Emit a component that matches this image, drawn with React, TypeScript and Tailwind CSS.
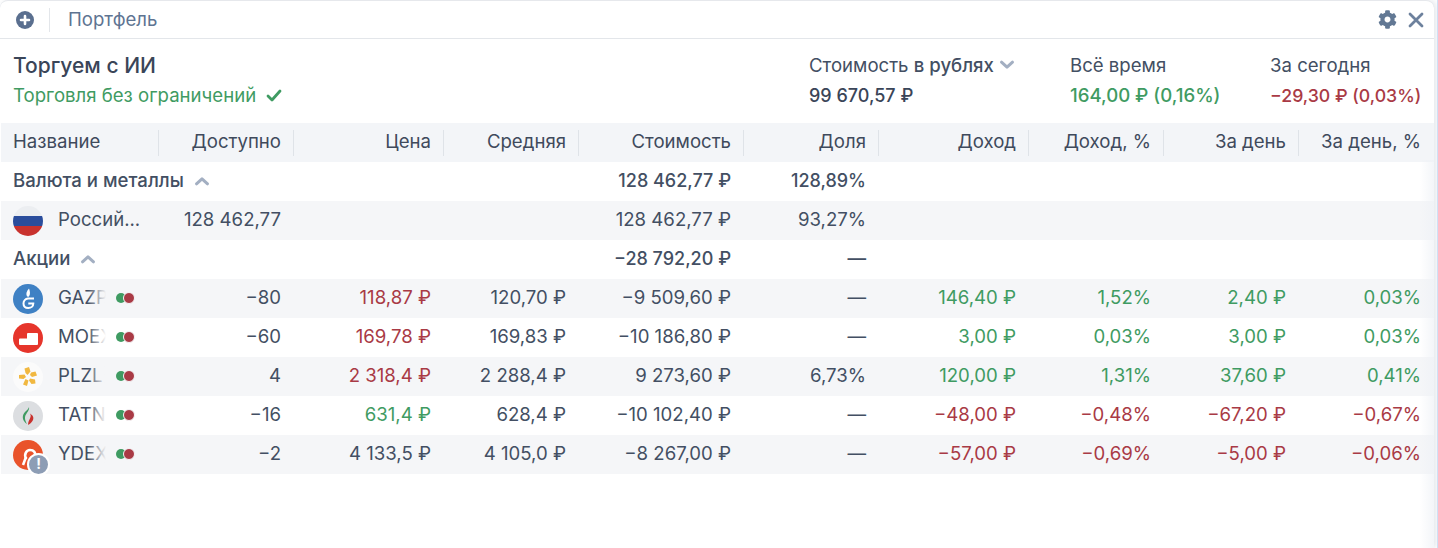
import { FaCog } from "react-icons/fa";

const GREEN = "text-[#3f9b62]";
const RED = "text-[#a93a45]";

function Chevron({ down }: { down?: boolean }) {
  return (
    <svg width="16" height="10" viewBox="0 0 16 10" className={down ? "rotate-180" : ""}>
      <path d="M2.5 7.8 L8 2.8 L13.5 7.8" fill="none" stroke="#a3afc2" strokeWidth="3" strokeLinecap="round" strokeLinejoin="round" />
    </svg>
  );
}

function Dots() {
  return (
    <span className="relative ml-[10px] mb-[2px] h-[12px] w-[20px] shrink-0">
      <span className="absolute left-0 top-[1px] h-[10px] w-[10px] rounded-full bg-[#3f9b62]" />
      <span className="absolute left-[7px] top-0 box-content h-[10px] w-[10px] rounded-full border-[1px] border-[#f5f6f8] bg-[#a93a45]" />
    </span>
  );
}

function FlagRu() {
  return (
    <svg width="30" height="30" viewBox="0 0 30 30">
      <defs>
        <clipPath id="flag">
          <circle cx="15" cy="15" r="15" />
        </clipPath>
      </defs>
      <g clipPath="url(#flag)">
        <rect width="30" height="10" fill="#eceef1" />
        <rect y="10" width="30" height="10" fill="#2a4d9c" />
        <rect y="20" width="30" height="10" fill="#c8322e" />
      </g>
    </svg>
  );
}

function Logo({ ticker }: { ticker: string }) {
  if (ticker === "GAZP") {
    return (
      <svg width="30" height="30" viewBox="0 0 30 30">
        <circle cx="15" cy="15" r="15" fill="#3f81c4" />
        <path d="M16 4.500c-2.500 3-3.200 5-2.200 7.500.5 1 1.500 1 2.300.2 1.400-2 .9-5-.1-7.700z" fill="#fff" />
        <path d="M21 14.500h-6a5 5 0 0 0-4.500 5c0 2.800 2 4.500 4.800 4.500s5-1.800 5-4.500h-5" fill="none" stroke="#fff" strokeWidth="2" />
      </svg>
    );
  }
  if (ticker === "MOEX") {
    return (
      <svg width="30" height="30" viewBox="0 0 30 30">
        <circle cx="15" cy="15" r="15" fill="#e6352b" />
        <path d="M6 16.500a1 1 0 0 1 1-1h7v-4.500a1 1 0 0 1 1-1h9a1 1 0 0 1 1 1v10a1 1 0 0 1-1 1H7a1 1 0 0 1-1-1z" fill="#fff" />
      </svg>
    );
  }
  if (ticker === "PLZL") {
    return (
      <svg width="30" height="30" viewBox="0 0 30 30">
        <circle cx="15" cy="15" r="15" fill="#fbfbfb" />
        <g fill="#f1b840">
          <path d="M11.500 6.500l4.500-1.500 1.500 4.500-3 3.500-2-2z" />
          <path d="M18 10.500l4.500-1 1.500 4-5 1.500-2-2z" />
          <path d="M17 16.500l5 1 .5 4-4 .5-2.500-3.500z" />
          <path d="M12.500 17l3 1.500-1.500 5.500-4-1.500z" />
          <path d="M6 13l5.500-.5 1.500 2.500-2.500 2-4.500-.5z" />
        </g>
      </svg>
    );
  }
  if (ticker === "TATN") {
    return (
      <svg width="30" height="30" viewBox="0 0 30 30">
        <circle cx="15" cy="15" r="15" fill="#dcdee1" />
        <path d="M16 6c1 4-4.500 7-4 11.500.2 2 1 3.800 2 5.500-3-2-4.800-5-4-8.500 1-4 5-5 6-8.500z" fill="#3f9b62" />
        <path d="M17 12.500c2.500 4-2.500 6.500-1.800 11.500 3-2 5.800-4.500 5-8-.5-1.800-2-2.500-3.200-3.500z" fill="#c8322e" />
      </svg>
    );
  }
  return (
    <span className="relative block h-[30px] w-[30px]">
      <svg width="30" height="30" viewBox="0 0 30 30">
        <circle cx="15" cy="15" r="15" fill="#e9532b" />
        <path d="M13 18c-2-3 0-8 4-8s6 3 5 6" fill="none" stroke="#fff" strokeWidth="2.600" strokeLinecap="round" />
        <path d="M13 17l-3 8" stroke="#fff" strokeWidth="2.600" />
      </svg>
      <span className="absolute left-[14px] top-[13px] box-content flex h-[19px] w-[19px] items-center justify-center rounded-full border-[2px] border-white bg-[#8d9db5] text-[14px] font-bold leading-none text-white">
        !
      </span>
    </span>
  );
}

const GRID = "grid grid-cols-[158px_135px_150px_135px_165px_135px_150px_135px_135px_135px]";

const HEAD = ["Название", "Доступно", "Цена", "Средняя", "Стоимость", "Доля", "Доход", "Доход, %", "За день", "За день, %"];

const ROWS = [
  { ticker: "GAZP", qty: "−80", price: "118,87 ₽", priceColor: RED, avg: "120,70 ₽", cost: "−9 509,60 ₽", share: "—", inc: "146,40 ₽", incP: "1,52%", day: "2,40 ₽", dayP: "0,03%", up: true },
  { ticker: "MOEX", qty: "−60", price: "169,78 ₽", priceColor: RED, avg: "169,83 ₽", cost: "−10 186,80 ₽", share: "—", inc: "3,00 ₽", incP: "0,03%", day: "3,00 ₽", dayP: "0,03%", up: true },
  { ticker: "PLZL", qty: "4", price: "2 318,4 ₽", priceColor: RED, avg: "2 288,4 ₽", cost: "9 273,60 ₽", share: "6,73%", inc: "120,00 ₽", incP: "1,31%", day: "37,60 ₽", dayP: "0,41%", up: true },
  { ticker: "TATN", qty: "−16", price: "631,4 ₽", priceColor: GREEN, avg: "628,4 ₽", cost: "−10 102,40 ₽", share: "—", inc: "−48,00 ₽", incP: "−0,48%", day: "−67,20 ₽", dayP: "−0,67%", up: false },
  { ticker: "YDEX", qty: "−2", price: "4 133,5 ₽", priceColor: "", avg: "4 105,0 ₽", cost: "−8 267,00 ₽", share: "—", inc: "−57,00 ₽", incP: "−0,69%", day: "−5,00 ₽", dayP: "−0,06%", up: false },
];

function Cell({ children, className = "" }: { children?: React.ReactNode; className?: string }) {
  return <div className={"flex items-center justify-end whitespace-nowrap pb-[2px] pr-[13px] " + className}>{children}</div>;
}

export default function App() {
  return (
    <div className="relative h-[548px] w-[1438px] overflow-hidden bg-white font-['Inter',sans-serif] text-[18.6px] leading-[21px] text-[#434f63]">
      <div className="h-[548px] w-[1434px] rounded-t-[8px] border-t-[1px] border-[#e6e8ec] bg-white shadow-[2px_0_6px_rgba(120,135,160,0.22)]">
        <div className="flex h-[38px] items-center border-b-[1px] border-[#e3e6ea] pl-[16px] pr-[10px]">
          <svg width="18" height="18" viewBox="0 0 18 18">
            <circle cx="9" cy="9" r="9" fill="#5a6f8f" />
            <path d="M9 5v8M5 9h8" stroke="#fff" strokeWidth="2.600" strokeLinecap="round" />
          </svg>
          <span className="ml-[15px] h-[24px] w-px bg-[#e3e6ea]" />
          <span className="ml-[18px] text-[#5e7492]">Портфель</span>
          <FaCog className="ml-auto text-[#627894]" size={19} />
          <svg width="16" height="16" viewBox="0 0 16 16" className="ml-[11px]">
            <path d="M2 2l12 12M14 2L2 14" stroke="#6d819d" strokeWidth="2.800" strokeLinecap="round" />
          </svg>
        </div>

        <div className="flex h-[84px] pl-[13px] pt-[12px]">
          <div className="w-[796px]">
            <div className="h-[30px] text-[21px] font-medium leading-[30px] text-[#3a4558]">Торгуем с ИИ</div>
            <div className={"flex h-[30px] items-center pb-[2px] " + GREEN}>
              Торговля без ограничений
              <svg width="16" height="13" viewBox="0 0 16 13" className="ml-[10px]">
                <path d="M2 7l4 4 8-9" fill="none" stroke="#3f9b62" strokeWidth="2.800" strokeLinecap="round" strokeLinejoin="round" />
              </svg>
            </div>
          </div>
          <div className="w-[261px]">
            <div className="flex h-[30px] items-center pb-[2px]">
              Стоимость&nbsp;<span className="font-medium">в рублях</span>
              <span className="ml-[5px]">
                <Chevron down />
              </span>
            </div>
            <div className="flex h-[30px] items-center pb-[2px] text-[18px] font-medium text-[#3a4558]">99 670,57 ₽</div>
          </div>
          <div className="w-[200px]">
            <div className="flex h-[30px] items-center pb-[2px]">Всё время</div>
            <div className={"flex h-[30px] items-center pb-[2px] font-medium " + GREEN}>164,00 ₽ (0,16%)</div>
          </div>
          <div>
            <div className="flex h-[30px] items-center pb-[2px]">За сегодня</div>
            <div className={"flex h-[30px] items-center pb-[2px] text-[17.7px] font-medium " + RED}>−29,30 ₽ (0,03%)</div>
          </div>
        </div>

        <div className="pl-px">
          <div className={GRID + " h-[39px] bg-[#f3f5f8] text-[#3f4a5c]"}>
            {HEAD.map((h, i) => (
              <div key={h} className="relative flex items-center pb-[2px]">
                <span className={i === 0 ? "pl-[12px]" : "w-full pr-[13px] text-right"}>{h}</span>
                {i < HEAD.length - 1 && <span className="absolute right-0 top-[7px] h-[26px] w-px bg-[#dfe3e8]" />}
              </div>
            ))}
          </div>

          <div className={GRID + " h-[39px]"}>
            <div className="col-span-2 flex items-center pb-[2px] pl-[12px] font-medium">
              Валюта и металлы
              <span className="ml-[10px]">
                <Chevron />
              </span>
            </div>
            <Cell />
            <Cell />
            <Cell className="text-[18px] font-medium">128 462,77 ₽</Cell>
            <Cell className="text-[18px] font-medium">128,89%</Cell>
          </div>

          <div className={GRID + " h-[39px] bg-[#f5f6f8]"}>
            <div className="flex items-center pl-[12px]">
              <FlagRu />
              <span className="ml-[15px] pb-[2px]">Россий...</span>
            </div>
            <Cell>128 462,77</Cell>
            <Cell />
            <Cell />
            <Cell>128 462,77 ₽</Cell>
            <Cell>93,27%</Cell>
          </div>

          <div className={GRID + " h-[39px]"}>
            <div className="flex items-center pb-[2px] pl-[12px] font-medium">
              Акции
              <span className="ml-[10px]">
                <Chevron />
              </span>
            </div>
            <Cell />
            <Cell />
            <Cell />
            <Cell className="text-[18px] font-medium">−28 792,20 ₽</Cell>
            <Cell className="font-medium">—</Cell>
          </div>

          {ROWS.map((r, i) => (
            <div key={r.ticker} className={GRID + " h-[39px] " + (i % 2 === 0 ? "bg-[#f5f6f8]" : "bg-white")}>
              <div className="flex items-center pl-[12px]">
                <Logo ticker={r.ticker} />
                <span className="relative ml-[15px] w-[48px] overflow-hidden whitespace-nowrap pb-[2px]">
                  {r.ticker}
                  <span className={"absolute inset-y-0 right-0 w-[18px] bg-gradient-to-r from-transparent " + (i % 2 === 0 ? "to-[#f5f6f8]" : "to-white")} />
                </span>
                <Dots />
              </div>
              <Cell>{r.qty}</Cell>
              <Cell className={r.priceColor}>{r.price}</Cell>
              <Cell>{r.avg}</Cell>
              <Cell>{r.cost}</Cell>
              <Cell>{r.share}</Cell>
              <Cell className={r.up ? GREEN : RED}>{r.inc}</Cell>
              <Cell className={r.up ? GREEN : RED}>{r.incP}</Cell>
              <Cell className={r.up ? GREEN : RED}>{r.day}</Cell>
              <Cell className={r.up ? GREEN : RED}>{r.dayP}</Cell>
            </div>
          ))}
        </div>
      </div>
      <div className="absolute left-[1420px] top-[160px] h-[388px] w-[14px] bg-gradient-to-r from-transparent to-[#eef1f6]/70" />
      <div className="absolute right-0 top-0 h-full w-[1px] bg-[#cfe0f5]" />
    </div>
  );
}
